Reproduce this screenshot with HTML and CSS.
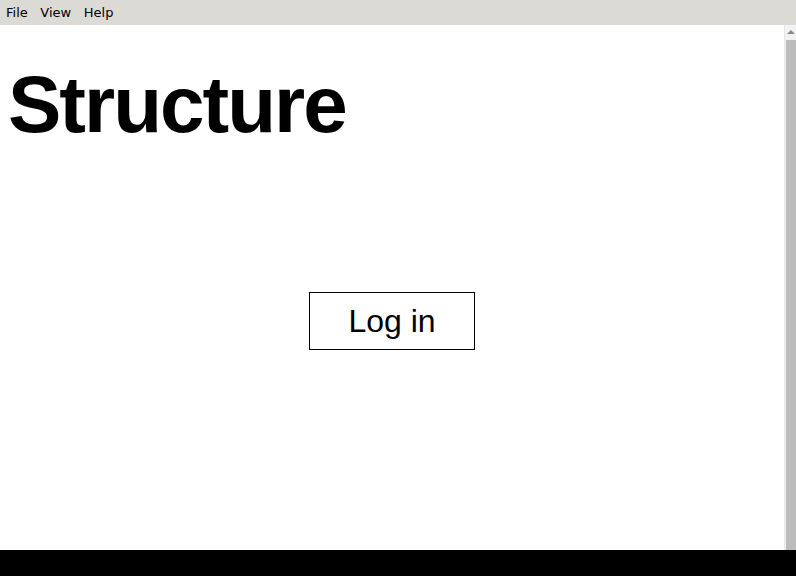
FILE: index.html
```html
<!DOCTYPE html>
<html>
<head>
<meta charset="utf-8">
<link rel="stylesheet" href="styles.css">
</head>
<body>
<div class="app">
  <div class="menubar">
    <span class="menu-item">File</span>
    <span class="menu-item">View</span>
    <span class="menu-item">Help</span>
  </div>
  <div class="viewport">
    <div class="content">
      <h1 class="title">Structure</h1>
      <div class="actions">
        <button class="login">Log in</button>
      </div>
    </div>
    <div class="scrollbar">
      <div class="arrow"></div>
      <div class="thumb"></div>
    </div>
  </div>
  <div class="statusbar"></div>
</div>
</body>
</html>
```
FILE: styles.css
```css
html, body {
  margin: 0;
  padding: 0;
  width: 796px;
  height: 576px;
  overflow: hidden;
  background: #fff;
}
.app {
  display: flex;
  flex-direction: column;
  width: 796px;
  height: 576px;
}
.menubar {
  height: 25px;
  flex: none;
  background: #dcdad5;
  display: flex;
  align-items: center;
  gap: 12.6px;
  padding-left: 6px;
  font-family: "DejaVu Sans", sans-serif;
  font-size: 13px;
  color: #000;
}
.viewport {
  flex: 1;
  display: flex;
  min-height: 0;
}
.content {
  flex: 1;
  padding: 0 8px;
}
.title {
  margin: 38px 0 0 0;
  font-family: "Liberation Sans", Arial, sans-serif;
  font-weight: bold;
  font-size: 80px;
  line-height: 84px;
  letter-spacing: -2px;
  color: #000;
}
.actions {
  display: flex;
  justify-content: center;
  margin-top: 145px;
}
.login {
  width: 166px;
  height: 58px;
  border: 1px solid #000;
  background: #fff;
  font-family: "Liberation Sans", Arial, sans-serif;
  font-size: 32px;
  color: #000;
  padding: 0;
}
.scrollbar {
  width: 11px;
  flex: none;
  border-left: 1px solid #e6e6e6;
  background: #f2f2f2;
  display: flex;
  flex-direction: column;
  align-items: center;
}
.arrow {
  margin-top: 5px;
  width: 0;
  height: 0;
  border-left: 4px solid transparent;
  border-right: 4px solid transparent;
  border-bottom: 4px solid #888;
}
.thumb {
  margin-top: 6px;
  width: 10px;
  flex: 1;
  background: #bcbcbc;
}
.statusbar {
  height: 26px;
  flex: none;
  background: #000;
}
```
